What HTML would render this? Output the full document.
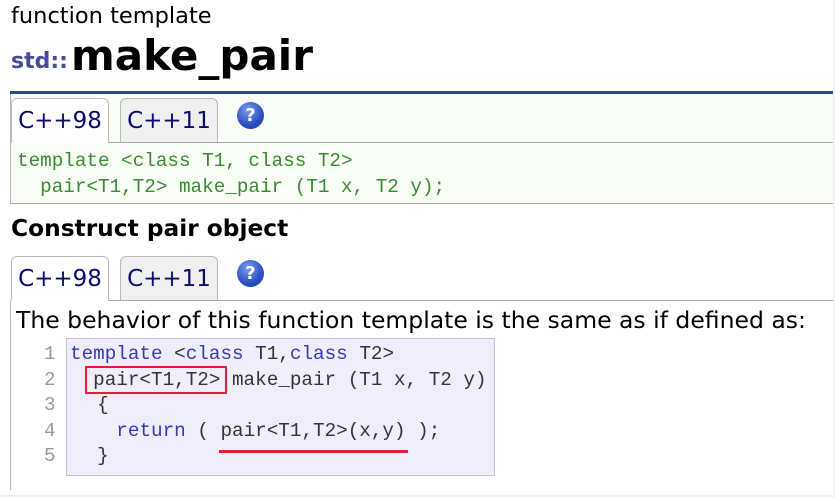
<!DOCTYPE html>
<html><head><meta charset="utf-8"><style>
body{margin:0;width:835px;height:497px;background:#fff;position:relative;overflow:hidden;font-family:"DejaVu Sans","Liberation Sans",sans-serif;}
.a{position:absolute;white-space:pre;}
.mono{font-family:"Liberation Mono","Noto Sans CJK SC",monospace;font-size:19.3px;}
.tab{position:absolute;height:44px;width:98px;border:1px solid #b8b8b8;border-bottom:none;border-radius:6px 6px 0 0;font-size:23px;color:#0a0a70;text-align:center;line-height:44px;box-sizing:border-box;}
.help{position:absolute;width:27px;height:27px;border-radius:50%;background:radial-gradient(circle at 40% 30%,#7a9cf0,#2a4fc4 60%,#1d3a9a);color:#fff;font-weight:bold;font-size:18px;text-align:center;line-height:27px;}
</style></head><body>
<div class="a" style="left:11px;top:3px;font-size:22.5px;color:#000">function template</div>
<div class="a" style="left:11px;top:49px;font-size:22px;font-weight:bold;color:#4a4a9a">std::</div>
<div class="a" style="left:71px;top:31px;font-size:42px;font-weight:bold;color:#000">make_pair</div>
<div style="position:absolute;left:10px;top:91px;width:823px;height:3px;background:#2b4a8a"></div>
<div style="position:absolute;left:10px;top:94px;width:823px;height:110px;background:#f8fef6;border-left:1px solid #b8b8b8;border-bottom:1px solid #a8a8a8;box-sizing:border-box"></div>
<div style="position:absolute;left:10px;top:142px;width:823px;height:1px;background:#a8a8a8"></div>
<div class="tab" style="left:11px;top:98px;background:#fff;border-bottom:1px solid #fff;height:45px">C++98</div>
<div class="tab" style="left:120px;top:98px;background:#f0f0f0">C++11</div>
<div class="help" style="left:237px;top:102px">?</div>
<div class="a mono" style="left:17px;top:148px;color:#3a8a30;line-height:26px">template &lt;class T1, class T2&gt;
  pair&lt;T1,T2&gt; make_pair (T1 x, T2 y);</div>
<div class="a" style="left:11px;top:215px;font-size:23.3px;font-weight:bold;color:#000">Construct pair object</div>
<div style="position:absolute;left:10px;top:300px;width:823px;height:1px;background:#a8a8a8"></div>
<div style="position:absolute;left:10px;top:300px;width:1px;height:190px;background:#b8b8b8"></div>
<div style="position:absolute;left:833px;top:0;width:2px;height:497px;background:#eef0f4"></div>
<div style="position:absolute;left:0;top:495px;width:835px;height:2px;background:#eef0f4"></div>
<div class="tab" style="left:11px;top:256px;background:#fff;border-bottom:1px solid #fff;height:45px">C++98</div>
<div class="tab" style="left:120px;top:256px;background:#f0f0f0">C++11</div>
<div class="help" style="left:237px;top:260px">?</div>
<div class="a" style="left:16px;top:306px;font-size:23.5px;color:#000">The behavior of this function template is the same as if defined as:</div>
<div style="position:absolute;left:66px;top:338px;width:429px;height:138px;background:#eeeefc;border:1px solid #c0c0d8;box-sizing:border-box"></div>
<div class="a mono" style="left:44px;top:342px;color:#999;line-height:25.5px;text-align:right">1
2
3
4
5</div>
<div class="a mono" style="left:70px;top:342px;color:#333;line-height:25.5px"><span style="color:#3838b0">template</span> &lt;<span style="color:#3838b0">class</span> T1,<span style="color:#3838b0">class</span> T2&gt;
  pair&lt;T1,T2&gt; make_pair (T1 x, T2 y)
  <span style="margin-left:4px">{</span>
    <span style="color:#3838b0">return</span> ( pair&lt;T1,T2&gt;(x,y) );
  <span style="margin-left:4px">}</span></div>
<div style="position:absolute;left:85px;top:366px;width:142px;height:28px;border:2px solid #e02030;box-sizing:border-box"></div>
<div style="position:absolute;left:219px;top:450px;width:189px;height:3px;background:#e02030"></div>
</body></html>
